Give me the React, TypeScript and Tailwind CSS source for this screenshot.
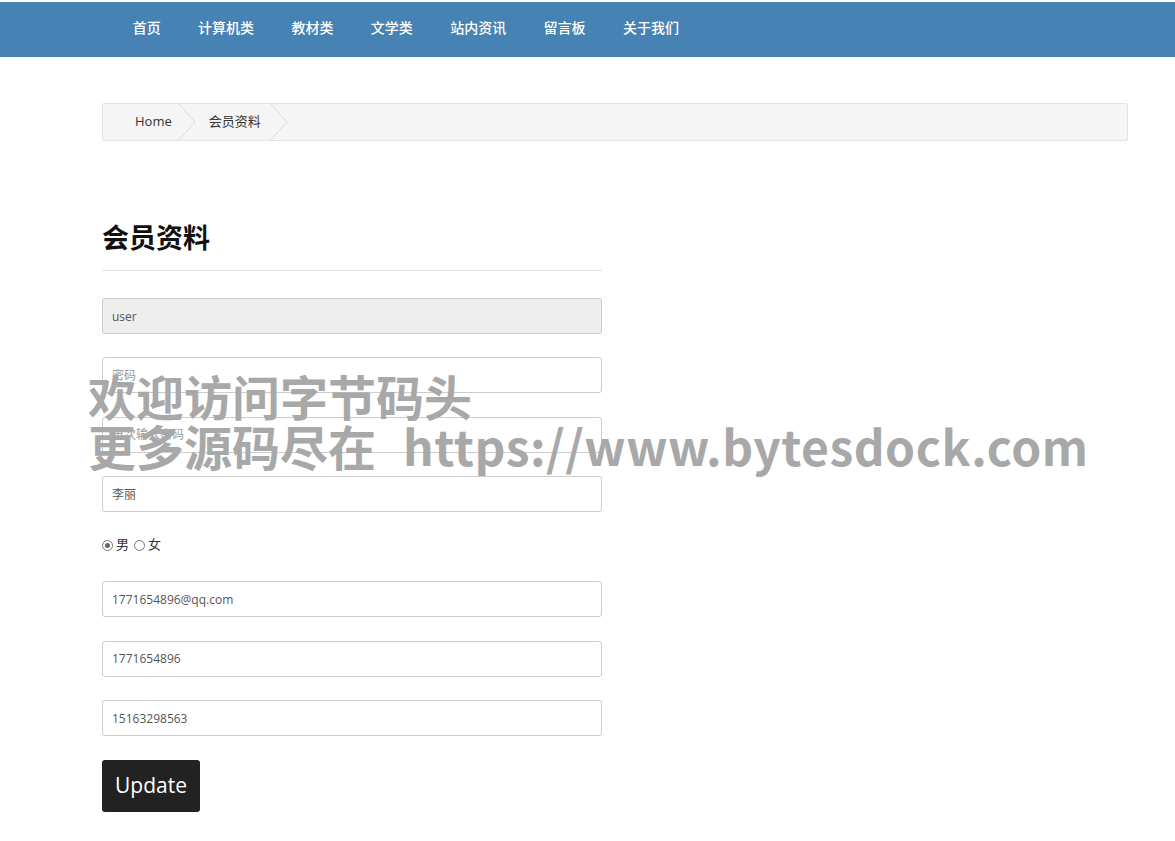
import React from 'react';

const navItems = ['首页', '计算机类', '教材类', '文学类', '站内资讯', '留言板', '关于我们'];

const font = { fontFamily: '"Open Sans", "Noto Sans CJK SC", sans-serif' };

function Chevron() {
  return (
    <svg width="20" height="38" viewBox="0 0 20 38" className="shrink-0">
      <polyline points="1,0 18,19 1,38" fill="none" stroke="#dcdcdc" strokeWidth="1" />
    </svg>
  );
}

function Field({ value, placeholder, disabled }: { value?: string; placeholder?: string; disabled?: boolean }) {
  return (
    <input
      readOnly
      defaultValue={value}
      placeholder={placeholder}
      className={`h-9 w-[500px] rounded-[3px] border border-[#cccccc] px-[9px] text-[12px] text-[#555] placeholder:text-[#999] outline-none ${
        disabled ? 'bg-[#eeeeee]' : 'bg-white'
      }`}
    />
  );
}

export default function App() {
  return (
    <div className="relative min-h-[841px] bg-white pt-[2px]" style={font}>
      <nav className="flex h-[55px] items-center bg-[#4682b4] pb-[4px] pl-[114px]">
        {navItems.map(item => (
          <a key={item} className="px-[18.7px] text-[14px] font-medium text-white">
            {item}
          </a>
        ))}
      </nav>

      <div className="pl-[102px] pr-[47px]">
        <div className="mt-[46px] flex h-[38px] items-center rounded-[2px] border border-[#e3e3e3] bg-[#f5f5f5] text-[13px] text-[#333]">
          <span className="pl-[32px] pr-[5px]">Home</span>
          <Chevron />
          <span className="pl-[12px] pr-[8px]">会员资料</span>
          <Chevron />
        </div>

        <h2 className="mt-[80px] text-[27px] font-bold leading-[34px] text-[#111]">会员资料</h2>
        <div className="mt-[15px] h-px w-[500px] bg-[#e0e0e0]" />

        <div className="mt-[27px] flex flex-col gap-[23.4px]">
          <Field value="user" disabled />
          <Field placeholder="密码" />
          <Field placeholder="再次输入密码" />
          <Field value="李丽" />
        </div>

        <div className="mt-[25px] flex h-[16px] items-center gap-[3px] text-[13px] text-[#333]">
          <span className="flex h-[11px] w-[11px] items-center justify-center rounded-full border border-[#777]">
            <span className="h-[5px] w-[5px] rounded-full bg-[#666]" />
          </span>
          <span>男</span>
          <span className="ml-[2px] h-[11px] w-[11px] rounded-full border border-[#777]" />
          <span>女</span>
        </div>

        <div className="mt-[28px] flex flex-col gap-[23.5px]">
          <Field value="1771654896@qq.com" />
          <Field value="1771654896" />
          <Field value="15163298563" />
        </div>

        <button className="mt-[24px] h-[52px] w-[98px] rounded-[3px] bg-[#222] text-[21px] font-medium text-white">
          Update
        </button>
      </div>

      <div
        className="pointer-events-none absolute left-[88px] top-[370px] text-[48px] font-bold leading-[50px] text-[#a8a8a8]"
        style={{ fontFamily: '"Noto Sans CJK SC", sans-serif' }}
      >
        <div>欢迎访问字节码头</div>
        <div className="flex whitespace-pre">
          <span>更多源码尽在</span>
          <span className="ml-[27px] tracking-[0.5px]">https://www.bytesdock.com</span>
        </div>
      </div>
    </div>
  );
}
